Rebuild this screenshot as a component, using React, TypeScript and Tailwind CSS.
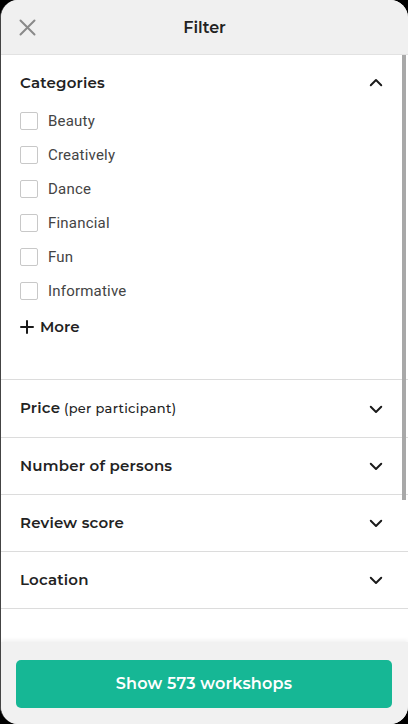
import React from "react";

const head = { fontFamily: "Montserrat, 'Open Sans', Inter, sans-serif" };
const body = { fontFamily: "Roboto, 'Liberation Sans', sans-serif" };

function ChevronDown() {
  return (
    <svg width="18" height="18" viewBox="0 0 24 24" fill="none" stroke="#1a1a1a" strokeWidth="2.6" strokeLinecap="round" strokeLinejoin="round">
      <path d="M5 9l7 7 7-7" />
    </svg>
  );
}
function ChevronUp() {
  return (
    <svg width="18" height="18" viewBox="0 0 24 24" fill="none" stroke="#1a1a1a" strokeWidth="2.6" strokeLinecap="round" strokeLinejoin="round">
      <path d="M5 15l7-7 7 7" />
    </svg>
  );
}

const cats = ["Beauty", "Creatively", "Dance", "Financial", "Fun", "Informative"];

function Section({ title, sub, tall }: { title: string; sub?: string; tall?: boolean }) {
  return (
    <div className={(tall ? "h-[58px]" : "h-[57px]") + " border-b border-[#dcdcdc] flex items-center justify-between pl-[19px] pr-[23px]"}>
      <div className="text-[15px] font-semibold text-[#222] tracking-[0.2px]" style={head}>
        {title}
        {sub && <span className="text-[13px] font-medium tracking-[0.3px]"> {sub}</span>}
      </div>
      <ChevronDown />
    </div>
  );
}

export default function App() {
  return (
    <div className="w-[408px] h-[724px] bg-black">
      <div className="relative w-full h-full bg-white rounded-[18px] overflow-hidden flex flex-col border-l border-[#444]">
        <div className="h-[55px] shrink-0 bg-[#f0f0f0] border-b border-[#e2e2e2] flex items-center relative">
          <svg className="absolute left-[18px] top-[19px]" width="17" height="17" viewBox="0 0 17 17" stroke="#8a8a8a" strokeWidth="2" strokeLinecap="round">
            <path d="M1.5 1.5l14 14M15.5 1.5l-14 14" />
          </svg>
          <div className="w-full text-center text-[16px] font-semibold text-[#222] pt-[2px]" style={head}>Filter</div>
        </div>
        <div className="flex-1 flex flex-col">
          <div className="border-b border-[#dcdcdc] pb-[43px]">
            <div className="h-[56px] flex items-center justify-between pl-[19px] pr-[23px]">
              <div className="text-[15px] font-semibold text-[#222] tracking-[0.2px]" style={head}>Categories</div>
              <ChevronUp />
            </div>
            <div className="flex flex-col gap-4 pl-[19px] mt-[1px]">
              {cats.map((c) => (
                <div key={c} className="flex items-center gap-[10px] h-[18px]">
                  <div className="w-[18px] h-[18px] border border-[#c8c8c8] rounded-[2px] bg-white" />
                  <span className="text-[15px] text-[#444] tracking-[0.2px]" style={body}>{c}</span>
                </div>
              ))}
            </div>
            <div className="flex items-center gap-[6px] pl-[19px] mt-[18px] h-[18px]">
              <svg width="14" height="14" viewBox="0 0 14 14" stroke="#1a1a1a" strokeWidth="2" strokeLinecap="round">
                <path d="M7 1v12M1 7h12" />
              </svg>
              <span className="text-[15px] font-semibold text-[#222]" style={head}>More</span>
            </div>
          </div>
          <Section title="Price" sub="(per participant)" tall />
          <Section title="Number of persons" />
          <Section title="Review score" />
          <Section title="Location" />
        </div>
        <div className="h-[82px] shrink-0 bg-[#f1f1f1] shadow-[0_-2px_4px_rgba(0,0,0,0.06)] pl-[15px] pr-4 pt-[18px]">
          <div className="h-[48px] rounded-[5px] bg-[#16b795] flex items-center justify-center text-white text-[16px] font-semibold tracking-[0.2px]" style={head}>
            Show 573 workshops
          </div>
        </div>
        <div className="absolute right-[2px] top-[55px] w-[4px] h-[445px] bg-[#a8a8a8]" />
      </div>
    </div>
  );
}
